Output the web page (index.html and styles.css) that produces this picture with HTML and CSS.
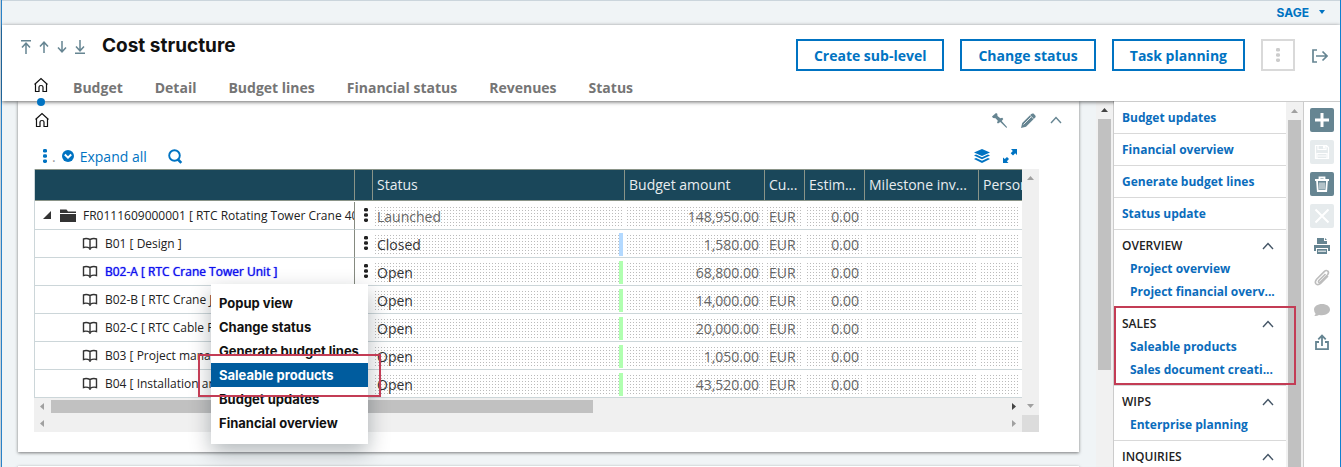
FILE: index.html
```html
<!DOCTYPE html>
<html lang="en">
<head>
<meta charset="utf-8">
<title>Cost structure</title>
<link rel="stylesheet" href="styles.css">
</head>
<body>
<svg class="defs" aria-hidden="true">
  <symbol id="home" viewBox="0 0 16 16"><path d="M2.500 6.500v8h3.500v-4.500q0-1.500 2-1.500t2 1.500v4.500h3.500v-8M1.500 7.500 8 1.500l6.500 6" fill="none" stroke="currentColor" stroke-width="1.200"/></symbol>
  <symbol id="book" viewBox="0 0 16 14"><path d="M8 2.500Q4.500.8 1.500 2v8.500q3.500-1 6.500 1 3-2 6.500-1V2Q11.500.8 8 2.500zV13" fill="none" stroke="currentColor" stroke-width="1.400"/></symbol>
  <symbol id="dots" viewBox="0 0 4 14"><rect x="0" y="0" width="4" height="3.600" rx="1.400"/><rect x="0" y="5.200" width="4" height="3.600" rx="1.400"/><rect x="0" y="10.400" width="4" height="3.600" rx="1.400"/></symbol>
  <symbol id="chevron" viewBox="0 0 12 8"><path d="M1 7 6 1.500 11 7" fill="none" stroke="currentColor" stroke-width="1.400"/></symbol>
</svg>
<header class="topbar">
  <button class="account">SAGE <svg width="6" height="4" viewBox="0 0 6 4"><path d="M0 0h6L3 4z"/></svg></button>
</header>
<section class="pagehead">
  <div class="headrow">
    <div class="arrows">
      <button aria-label="First"><svg width="12" height="14" viewBox="0 0 12 14"><path d="M1 .7h10M6 14V3M2 7.500 6 3.200l4 4.300"/></svg></button>
      <button aria-label="Previous"><svg width="12" height="14" viewBox="0 0 12 14"><path d="M6 13V2M2 6.500 6 2.200l4 4.300"/></svg></button>
      <button aria-label="Next"><svg width="12" height="14" viewBox="0 0 12 14"><path d="M6 1v11M2 7.500l4 4.300 4-4.300"/></svg></button>
      <button aria-label="Last"><svg width="12" height="14" viewBox="0 0 12 14"><path d="M1 13.300h10M6 0v11M2 6.500l4 4.300 4-4.300"/></svg></button>
    </div>
    <h1>Cost structure</h1>
    <div class="actions">
      <button class="action">Create sub-level</button>
      <button class="action">Change status</button>
      <button class="action">Task planning</button>
      <button class="more" aria-label="More"><svg width="4" height="14"><use href="#dots"/></svg></button>
      <button class="exit" aria-label="Exit"><svg width="16" height="14" viewBox="0 0 16 14"><path d="M5 1H1v12h4M4 7h11M10.500 2.500 15 7l-4.500 4.500" fill="none" stroke="currentColor" stroke-width="1.700"/></svg></button>
    </div>
  </div>
  <nav class="tabs">
    <a href="#" class="current" aria-label="Home"><svg width="16" height="16"><use href="#home"/></svg></a>
    <a href="#">Budget</a><a href="#">Detail</a><a href="#">Budget lines</a><a href="#">Financial status</a><a href="#">Revenues</a><a href="#">Status</a>
  </nav>
</section>
<div class="workspace">
  <main class="content">
    <div class="cards">
      <section class="card">
        <div class="cardhead">
          <svg class="cardhome" width="16" height="16"><use href="#home"/></svg>
          <div class="cardtools">
            <button aria-label="Pin"><svg width="15" height="15" viewBox="0 0 15 15"><path d="M4 0 0 3.500l1 1.600 2.500.2 2.300 2.500-.8 2 1 .7 2.300-1.600L14.500 15l.5-1-5.300-6 1.600-2-1-1.200-2 .5L5.500 3 5.300.8z" fill="currentColor"/></svg></button>
            <button aria-label="Edit"><svg width="15" height="15" viewBox="0 0 15 15"><path d="m0 15 1.200-5L10 1.200Q11.200 0 12.500.600l1.800 1.800q.9 1.200-.3 2.400L5 13.800z" fill="currentColor"/><path d="m9.200 2.500 3.400 3.400M2.500 11.500 10 4" stroke="#fff" stroke-width=".8"/></svg></button>
            <button aria-label="Collapse"><svg width="12" height="8"><use href="#chevron"/></svg></button>
          </div>
        </div>
        <div class="gridtools">
          <button class="kebab" aria-label="Grid actions"><svg width="4" height="14"><use href="#dots"/></svg></button>
          <span class="sep">.</span>
          <button class="expand"><svg width="12" height="12" viewBox="0 0 12 12"><circle cx="6" cy="6" r="6" fill="currentColor"/><path d="M2.800 4.500 6 7.700l3.200-3.200" fill="none" stroke="#fff" stroke-width="2"/></svg>Expand all</button>
          <button class="search" aria-label="Search"><svg width="15" height="15" viewBox="0 0 15 15"><circle cx="6.500" cy="6.500" r="5.300" fill="none" stroke="currentColor" stroke-width="1.900"/><path d="m9.500 10 3.800 3.800" stroke="currentColor" stroke-width="2.600"/></svg></button>
          <div class="gridright">
            <button aria-label="Layers"><svg width="16" height="14" viewBox="0 0 16 14"><path d="M8 0 0 3.500 8 7l8-3.500zM0 6.500l2-1 6 2.700 6-2.700 2 1L8 10.300zM0 10l2-1 6 2.700L14 9l2 1-8 4z" fill="currentColor"/></svg></button>
            <button aria-label="Full screen"><svg width="14" height="14" viewBox="0 0 14 14"><path d="M8 0h6v6l-1.800-1.700L10 6.400 7.700 4.200 9.800 2zM0 14V8.500l1.800 1.600L4 8l2 2-2.200 2.200L5.500 14z" fill="currentColor"/></svg></button>
          </div>
        </div>
        <div class="grid">
          <div class="gridmain">
            <table>
              <colgroup><col class="c-tree"><col class="c-menu"><col><col class="c-amount"><col class="c-cur"><col class="c-est"><col class="c-mile"><col class="c-pers"></colgroup>
              <thead><tr><th><div></div></th><th><div></div></th><th><div>Status</div></th><th><div>Budget amount</div></th><th><div>Cu...</div></th><th><div>Estim...</div></th><th><div>Milestone inv...</div></th><th><div>Person</div></th></tr></thead>
              <tbody>
                <tr class="root"><td><div class="tree"><svg width="9" height="9" viewBox="0 0 9 9"><path d="M8 0v8H0z"/></svg><svg class="folder" width="16" height="13" viewBox="0 0 16 13"><path d="M0 .5h6.500l1.500 2h8V4H0zM0 5h16v8H0z"/></svg><span>FR0111609000001 [ RTC Rotating Tower Crane 40</span></div></td><td><svg width="4" height="14"><use href="#dots"/></svg></td><td><div class="cell">Launched</div></td><td><div class="cell num">148,950.00</div></td><td><div class="cell">EUR</div></td><td><div class="cell num">0.00</div></td><td><div class="cell"></div></td><td><div class="cell"></div></td></tr>
                <tr><td><div class="tree leaf"><svg width="16" height="14"><use href="#book"/></svg><span>B01 [ Design ]</span></div></td><td><svg width="4" height="14"><use href="#dots"/></svg></td><td><div class="cell closed">Closed</div></td><td><div class="cell num">1,580.00</div></td><td><div class="cell">EUR</div></td><td><div class="cell num">0.00</div></td><td><div class="cell"></div></td><td><div class="cell"></div></td></tr>
                <tr class="selected"><td><div class="tree leaf"><svg width="16" height="14"><use href="#book"/></svg><span>B02-A [ RTC Crane Tower Unit ]</span></div></td><td><svg width="4" height="14"><use href="#dots"/></svg></td><td><div class="cell open">Open</div></td><td><div class="cell num">68,800.00</div></td><td><div class="cell">EUR</div></td><td><div class="cell num">0.00</div></td><td><div class="cell"></div></td><td><div class="cell"></div></td></tr>
                <tr><td><div class="tree leaf"><svg width="16" height="14"><use href="#book"/></svg><span>B02-B [ RTC Crane J</span></div></td><td></td><td><div class="cell open">Open</div></td><td><div class="cell num">14,000.00</div></td><td><div class="cell">EUR</div></td><td><div class="cell num">0.00</div></td><td><div class="cell"></div></td><td><div class="cell"></div></td></tr>
                <tr><td><div class="tree leaf"><svg width="16" height="14"><use href="#book"/></svg><span>B02-C [ RTC Cable P</span></div></td><td></td><td><div class="cell open">Open</div></td><td><div class="cell num">20,000.00</div></td><td><div class="cell">EUR</div></td><td><div class="cell num">0.00</div></td><td><div class="cell"></div></td><td><div class="cell"></div></td></tr>
                <tr><td><div class="tree leaf"><svg width="16" height="14"><use href="#book"/></svg><span>B03 [ Project mana</span></div></td><td></td><td><div class="cell open">Open</div></td><td><div class="cell num">1,050.00</div></td><td><div class="cell">EUR</div></td><td><div class="cell num">0.00</div></td><td><div class="cell"></div></td><td><div class="cell"></div></td></tr>
                <tr><td><div class="tree leaf"><svg width="16" height="14"><use href="#book"/></svg><span>B04 [ Installation an</span></div></td><td></td><td><div class="cell open">Open</div></td><td><div class="cell num">43,520.00</div></td><td><div class="cell">EUR</div></td><td><div class="cell num">0.00</div></td><td><div class="cell"></div></td><td><div class="cell"></div></td></tr>
              </tbody>
            </table>
            <div class="hbar"><svg width="4" height="7" viewBox="0 0 4 7"><path d="M4 0v7L0 3.500z"/></svg><i class="hthumb"></i><svg class="dark" width="4" height="7" viewBox="0 0 4 7"><path d="M0 0v7l4-3.500z"/></svg></div>
            <div class="hbar"><svg width="4" height="7" viewBox="0 0 4 7"><path d="M4 0v7L0 3.500z"/></svg><svg width="4" height="7" viewBox="0 0 4 7"><path d="M0 0v7l4-3.500z"/></svg></div>
          </div>
          <div class="gridside">
            <div class="vbar"><svg width="7" height="4" viewBox="0 0 7 4"><path d="M0 4h7L3.500 0z"/></svg><svg width="7" height="4" viewBox="0 0 7 4"><path d="M0 0h7L3.500 4z"/></svg></div>
            <div class="corner"></div>
          </div>
        </div>
      </section>
      <section class="card next"></section>
    </div>
    <div class="scroll"><svg class="dark" width="7" height="4" viewBox="0 0 7 4"><path d="M0 4h7L3.500 0z"/></svg><i class="short"></i></div>
  </main>
  <aside class="links">
    <nav>
      <a class="top" href="#">Budget updates</a>
      <a class="top" href="#">Financial overview</a>
      <a class="top" href="#">Generate budget lines</a>
      <a class="top" href="#">Status update</a>
      <section><button>OVERVIEW<svg width="12" height="8"><use href="#chevron"/></svg></button><a href="#">Project overview</a><a href="#">Project financial overv...</a></section>
      <section class="marked"><button>SALES<svg width="12" height="8"><use href="#chevron"/></svg></button><a href="#">Saleable products</a><a href="#">Sales document creati...</a></section>
      <section><button>WIPS<svg width="12" height="8"><use href="#chevron"/></svg></button><a href="#">Enterprise planning</a></section>
      <section><button>INQUIRIES<svg width="12" height="8"><use href="#chevron"/></svg></button></section>
    </nav>
    <div class="scroll"><svg width="7" height="4" viewBox="0 0 7 4"><path d="M0 4h7L3.500 0z"/></svg><i></i></div>
  </aside>
  <div class="toolbar">
    <button class="solid" aria-label="New"><svg width="24" height="24" viewBox="0 0 24 24"><path d="M12 5v14M5 12h14" stroke="#fff" stroke-width="3"/></svg></button>
    <button class="faded" aria-label="Save"><svg class="line" width="24" height="24" viewBox="0 0 24 24" stroke="#fff" stroke-width="1.200"><path d="M5.500 5.500h11l2 2v11h-13zM8 5.500v4h8v-4M7 18v-4.500h10V18M8 16h8"/><path d="M14 6v2.500" stroke-width="2"/></svg></button>
    <button class="solid" aria-label="Delete"><svg class="line" width="24" height="24" viewBox="0 0 24 24" stroke="#fff" stroke-width="1.800"><path d="M5 8h14M9.500 7.500V5.500h5v2M7 8.500l.8 10.500h8.400L17 8.500"/><path d="M10 10.500v7M12 10.500v7M14 10.500v7" stroke-width="1"/></svg></button>
    <button class="faded" aria-label="Cancel"><svg width="24" height="24" viewBox="0 0 24 24"><path d="m5.500 5.500 13 13m0-13-13 13" stroke="#fff" stroke-width="2"/></svg></button>
    <div class="plain">
      <button aria-label="Print"><svg width="24" height="24" viewBox="0 0 24 24"><path d="M7 4h7v3h3v3H7zM15 4l2 2h-2zM4 11h16v6h-2v-3H6v3H4zM7 15h10v5H7z" fill="#668592"/><path d="M8 17.200h8" stroke="#fff"/></svg></button>
      <button aria-label="Attachments"><svg width="24" height="24" viewBox="0 0 24 24"><path d="m15.500 8-6.800 6.800q-.8 1.400.4 1.800.7.200 1.300-.5l7.200-7.300q1.800-2.500 0-3.800-1.500-1.200-3.400.6l-7.600 7.600q-2.300 2.900-.5 4.800 2 1.600 4.500-.6l7.400-7.400" fill="none" stroke="#bdbdbd" stroke-width="1.600"/></svg></button>
      <button aria-label="Comments"><svg width="24" height="24" viewBox="0 0 24 24"><path d="M12 6c4.500 0 8 2.400 8 5.600s-3.500 5.600-8 5.600q-1.500 0-3-.3Q7 18.300 4.200 18q1.300-1 1.300-2.600Q4 13.800 4 11.600C4 8.400 7.500 6 12 6z" fill="#bdbdbd"/></svg></button>
      <button aria-label="Share"><svg width="24" height="24" viewBox="0 0 24 24"><path d="M9 12H6v7.200h12V12h-3M12 16V6M8.300 9.300 12 5.500l3.700 3.800" fill="none" stroke="#668592" stroke-width="1.800"/></svg></button>
    </div>
  </div>
  <div class="popup" role="menu">
    <button role="menuitem">Popup view</button>
    <button role="menuitem">Change status</button>
    <button role="menuitem">Generate budget lines</button>
    <button role="menuitem" class="active">Saleable products</button>
    <button role="menuitem">Budget updates</button>
    <button role="menuitem">Financial overview</button>
  </div>
</div>
</body>
</html>
```
FILE: styles.css
```css
*, *::before, *::after { box-sizing: border-box; }
body {
  margin: 0;
  height: 100vh;
  overflow: hidden;
  display: flex;
  flex-direction: column;
  border-right: 1px solid #1080d0;
  border-left: 1px solid #c8d0d6;
  box-shadow: inset 1px 0 #2a82c8;
  padding-left: 1px;
  font: 14px "Open Sans", sans-serif;
  color: #333;
  background: #fff;
}
button { font: inherit; color: inherit; background: none; border: 0; padding: 0; cursor: pointer; }
a { text-decoration: none; }
svg { display: block; flex: none; fill: currentColor; }
.line { fill: none; }
.defs { position: absolute; width: 0; height: 0; }

.topbar { flex: none; height: 25px; border-top: 1px solid #cbd5dc; background: #f0f4f6; display: flex; justify-content: flex-end; padding-right: 15px; }
.account { display: flex; align-items: center; gap: 10px; padding-bottom: 2px; font: bold 12px Inter, sans-serif; color: #0073c2; }

.pagehead { flex: none; height: 76px; background: #fff; box-shadow: 0 1px 4px rgba(0, 0, 0, .6); position: relative; z-index: 1; }
.headrow { display: flex; height: 49px; padding: 0 11px 0 18px; }
.arrows { display: flex; gap: 6px; align-items: center; height: 44px; color: #668592; }
.arrows path { fill: none; stroke: currentColor; stroke-width: 1.5; }
h1 { margin: 0 0 0 16px; font: 700 19px/42px Inter, sans-serif; color: #111; white-space: nowrap; }
.actions { margin-left: auto; display: flex; gap: 16px; padding-top: 14px; }
.action { height: 32px; padding: 0 16px; border: 2px solid #0073c2; color: #0073c2; font-weight: 700; white-space: nowrap; }
.more { height: 32px; width: 34px; border: 2px solid #d9d9d9; color: #ccc; display: flex; align-items: center; justify-content: center; }
.exit { height: 34px; color: #668592; padding: 0 1px; }
.tabs { display: flex; gap: 32px; height: 27px; padding-left: 31px; line-height: 28px; font-weight: 700; }
.tabs a { color: #757575; }
.tabs .current { color: #111; position: relative; width: 16px; padding-top: 3px; margin-right: -8px; }
.current::after { content: ""; position: absolute; left: 4px; top: 24px; width: 8px; height: 8px; border-radius: 50%; background: #0073c2; }

.workspace { flex: 1; min-height: 0; display: flex; position: relative; }
.content { flex: 1; min-width: 0; display: flex; background: #f0f4f6; border-right: 1px solid #ccc; }
.cards { flex: 1; min-width: 0; padding: 0 17px 0 16px; }
.card { background: #fff; padding: 0 16px 20px; box-shadow: 0 1px 3px rgba(0, 0, 0, .5); }
.card.next { margin-top: 14px; }
.cardhead { display: flex; justify-content: space-between; align-items: center; height: 38px; padding-right: 1px; color: #111; }
.cardtools { display: flex; align-items: center; gap: 14px; color: #668592; }
.gridtools { margin-top: 4px; height: 26px; display: flex; align-items: center; color: #0073c2; padding: 0 46px 0 9px; }
.sep { margin: 0 6px 0 5px; color: #999; }
.expand { display: flex; align-items: center; gap: 6px; }
.search { margin-left: 21px; }
.gridright { margin-left: auto; display: flex; align-items: center; gap: 13px; }
.grid { display: flex; margin-right: 24px; }
.gridmain { flex: 1; min-width: 0; }

table { width: 100%; table-layout: fixed; border-collapse: separate; border-spacing: 0; border-left: 1px solid #ccd6d9; }
.c-tree { width: 320px; }
.c-menu { width: 18px; }
.c-amount { width: 140px; }
.c-cur { width: 40px; }
.c-est { width: 60px; }
.c-mile { width: 114px; }
.c-pers { width: 43px; }
th { padding: 0 0 1px; font-weight: 400; text-align: left; color: #e8edf0; }
th div { height: 32px; line-height: 29px; padding-left: 4px; background: #1a475a; border: solid #8a9488; border-width: 1px 1px 1px 0; overflow: hidden; white-space: nowrap; }
th:last-child div { border-right: 0; }
td { height: 28px; padding: 3px 2px 1px 0; border-bottom: 1px solid #ccd6d9; }
td:first-child { padding: 0; border-right: 1px solid #858a80; }
td:nth-child(2) { padding: 0 0 2px 9px; color: #222; }
.tree { display: flex; align-items: center; height: 26px; padding-left: 8px; overflow: hidden; white-space: nowrap; font-size: 12px; color: #222; }
.folder { margin: 0 7px 0 8px; }
.leaf { padding-left: 47px; gap: 7px; }
.tree svg { color: #333; }
.selected .tree span { color: #1010f0; text-shadow: 0 0 1px #1010f0; }
.cell {
  height: 23px;
  line-height: 23px;
  padding: 0 4px;
  color: #666;
  white-space: nowrap;
  overflow: hidden;
  background: linear-gradient(#fff 2px, transparent 2px) 0 0 / 3px 3px, linear-gradient(90deg, #fff 2px, #bbb 2px) 0 0 / 3px 3px;
}
.num { text-align: right; }
.closed, .open { color: #333; border-right: 4px solid #b3d9ff; }
.open { border-color: #b0ffb0; }

.hbar { height: 17px; display: flex; align-items: center; justify-content: space-between; padding: 0 6px; background: #f0f0f0; color: #a0a0a0; }
.hthumb { height: 13px; width: 55.5%; background: #c1c1c1; margin: 0 auto 0 7px; }
.dark { color: #444; }
.gridside { width: 17px; display: flex; flex-direction: column; background: #f0f0f0; }
.vbar { flex: 1; display: flex; flex-direction: column; justify-content: space-between; align-items: center; padding: 7px 0; color: #a0a0a0; }
.corner { height: 17px; background: #dcdcdc; }

.scroll { width: 17px; flex: none; display: flex; flex-direction: column; align-items: center; gap: 7px; padding-top: 7px; background: #f1f1f1; color: #a0a0a0; }
.scroll i { width: 13px; flex: 1; background: #c1c1c1; }
.scroll .short { flex: none; height: 70%; }

.links { width: 189px; display: flex; position: relative; z-index: 2; border-top: 1px solid #ccc; background: #fff; }
.links nav { flex: 1; min-width: 0; }
.links a { display: block; height: 23px; line-height: 23px; padding-left: 16px; font-size: 12px; font-weight: 700; color: #0a6cbc; white-space: nowrap; }
.links .top { height: 32px; line-height: 32px; padding-left: 8px; border-bottom: 1px solid #d9d9d9; }
.links section { padding-bottom: 4px; border-bottom: 1px solid #d9d9d9; }
.links section button { display: flex; align-items: center; justify-content: space-between; width: 100%; height: 27px; padding: 4px 12px 0 8px; font-size: 12px; font-weight: 600; color: #222; }
.links section svg { color: #456; }
.marked { position: relative; }
.marked::after { content: ""; position: absolute; left: 0; top: -2px; width: 182px; height: 79px; border: 2px solid #c33c55; pointer-events: none; }
.toolbar { width: 37px; position: relative; z-index: 2; display: flex; flex-direction: column; align-items: center; gap: 8px; padding: 6px 1px 0 0; background: #fff; border-top: 1px solid #ccc; border-left: 1px solid #ccc; }
.toolbar button { width: 24px; height: 24px; flex: none; border-radius: 2px; }
.plain { display: flex; flex-direction: column; gap: 8px; margin-top: -2px; }
.solid { background: #668592; }
.faded { background: #e6ebed; }

.popup { position: absolute; z-index: 1; left: 209px; top: 183px; width: 157px; padding: 7px 0 9px; background: #fff; box-shadow: 0 8px 20px rgba(0, 20, 30, .3); }
.popup button { display: block; width: 100%; height: 24px; padding-left: 8px; text-align: left; font: 700 13px Inter, sans-serif; color: #111; white-space: nowrap; }
.popup .active { background: #005c9e; color: #fff; }
.popup::after { content: ""; position: absolute; left: -13px; top: 70px; width: 183px; height: 43px; border: 2px solid #c33c55; pointer-events: none; }
```
